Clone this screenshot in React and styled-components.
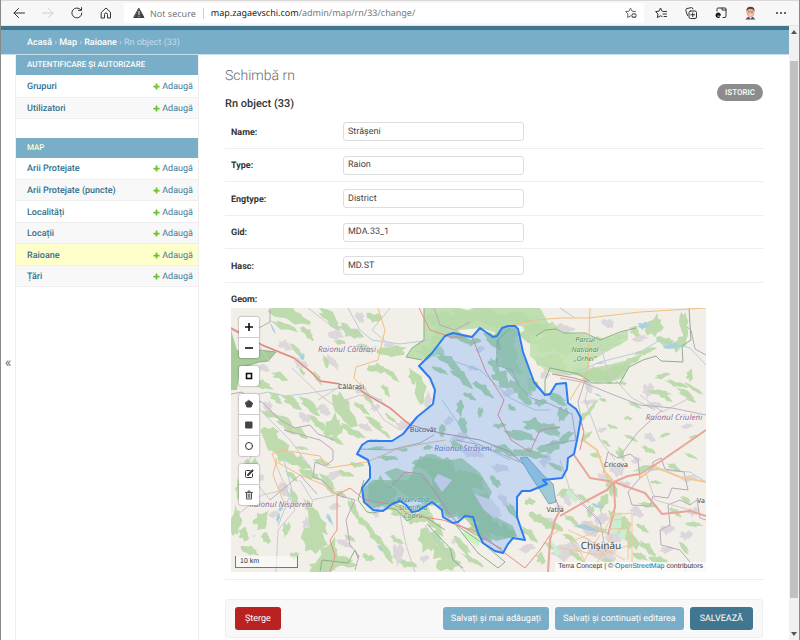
import React from "react";
import styled, { createGlobalStyle, css } from "styled-components";

const GlobalStyle = createGlobalStyle`
  *, *::before, *::after { box-sizing: border-box; }
  body { margin: 0; background: #fff; color: #333; font: 9px/14px Roboto, "Liberation Sans", sans-serif; text-rendering: geometricPrecision; }
  button, input { font: inherit; margin: 0; text-rendering: inherit; }
  a { text-decoration: none; }
`;

/* ---------- window ---------- */

const Window = styled.div`
  min-height: 100vh;
  display: flex;
  flex-direction: column;
  border: 0 solid #8a8a8a;
  border-width: 0 1px;
`;
const Toolbar = styled.header`
  display: flex;
  align-items: center;
  height: 26px;
  padding: 0 12px 0 11px;
  background: #f7f7f7;
  border-top: 1px solid #dcd8d8;
  border-bottom: 1px solid #e4e2e2;
`;
const ToolGroup = styled.div`
  display: flex;
  align-items: center;
  gap: ${(p) => p.$gap}px;
`;
const ToolButton = styled.button`
  display: flex;
  align-items: center;
  justify-content: center;
  width: 13px;
  height: 14px;
  padding: 0;
  border: 0;
  background: none;
  color: ${(p) => (p.disabled ? "#cfcfcf" : "#333")};
`;
const AddressBar = styled.div`
  flex: 1;
  display: flex;
  align-items: center;
  height: 20px;
  margin: 0 10px 0 12px;
  padding: 0 7px 0 9px;
  border-radius: 3px;
  background: #fff;
  color: #777;
  font: 9px/14px "Noto Sans", "Open Sans", sans-serif;
`;
const Security = styled.span`
  padding: 0 7px 0 5px;
  margin-right: 7px;
  border-right: 1px solid #d0d0d0;
  line-height: 11px;
`;
const Url = styled.span`
  flex: 1;
  white-space: nowrap;
  b { font-weight: 400; color: #222; }
`;
const Viewport = styled.div`
  flex: 1;
  display: flex;
`;
const Page = styled.div`
  flex: 1;
  min-width: 0;
  display: flex;
  flex-direction: column;
`;
const ScrollTrack = styled.div`
  width: 10px;
  display: grid;
  grid-template-rows: 35px 1fr 30px 12px;
  justify-items: center;
  background: #f1f1f1;
  svg { margin-top: 4px; }
`;
const ScrollThumb = styled.div`
  width: 8px;
  background: #c1c1c1;
`;

/* ---------- admin chrome ---------- */

const Breadcrumbs = styled.nav`
  height: 29px;
  padding: 5px 26px 0;
  border-top: 4px solid #417690;
  border-bottom: 1px solid #c9dfe9;
  background: #79aec8;
  color: #c4dce8;
  font-size: 9px;
  line-height: 17px;
  a { color: #fff; font-weight: 500; }
`;
const Body = styled.div`
  flex: 1;
  display: flex;
`;
const SidebarToggle = styled.button`
  display: flex;
  justify-content: center;
  width: 15px;
  padding: 299px 0 0;
  border: 0;
  border-right: 1px solid #eee;
  background: #fff;
  color: #417690;
  font-size: 14px;
  line-height: 18px;
`;
const Sidebar = styled.nav`
  width: 183px;
  border-right: 1px solid #eee;
`;
const Module = styled.table`
  width: 100%;
  margin-bottom: 19px;
  border-collapse: collapse;
  caption {
    height: 20px;
    padding: 0 11px;
    background: #79aec8;
    color: ${(p) => (p.$current ? "#ffc" : "#fff")};
    font-size: 8px;
    font-weight: 500;
    line-height: 20px;
    text-align: left;
    text-transform: uppercase;
  }
`;
const ModelRow = styled.tr`
  height: 22px;
  border-bottom: 1px solid #eee;
  &:nth-child(even) { height: 21px; background: #f8f8f8; }
  ${(p) => p.$current && css`&& { background: #ffc; }`}
  th, td { padding: 2px 0 0; line-height: 14px; white-space: nowrap; }
  th { padding-left: 11px; text-align: left; font-weight: 500; }
  td { padding-right: 5px; text-align: right; }
  a { color: #447e9b; }
  th a { color: #35708d; }
  svg { margin-right: 2px; vertical-align: -1px; }
`;
const Main = styled.main`
  flex: 1;
  min-width: 0;
  padding: 12px 26px 2px;
`;
const Heading = styled.div`
  display: flex;
  justify-content: space-between;
  align-items: center;
  margin-bottom: 3px;
`;
const Title = styled.h1`
  margin: 0 0 10px;
  color: #666;
  font-size: 14px;
  font-weight: 300;
  line-height: 18px;
`;
const Subtitle = styled.h2`
  margin: 0;
  font-size: 11px;
  font-weight: 500;
  line-height: 17px;
`;
const HistoryLink = styled.a`
  margin-top: 6px;
  padding: 0 8px;
  border-radius: 9px;
  background: #8c8c8c;
  color: #fff;
  font-size: 8px;
  font-weight: 500;
  line-height: 17px;
  text-transform: uppercase;
`;
const FormRow = styled.div`
  display: flex;
  align-items: center;
  height: 34px;
  padding-left: 6px;
  border-bottom: 1px solid #eee;
  &:nth-child(even) { height: 33px; }
`;
const Label = styled.label`
  width: 112px;
  padding-top: 2px;
  font-weight: 700;
  line-height: 14px;
`;
const TextInput = styled.input.attrs({ type: "text" })`
  width: 181px;
  height: 19px;
  padding: 0 4px;
  border: 1px solid #ddd;
  border-radius: 3px;
  background: #fff;
  color: #444;
`;
const MapRow = styled.div`
  padding: 10px 0 7px 6px;
  border-bottom: 1px solid #eee;
`;
const MapLabel = styled.div`
  height: 15px;
  font-weight: 700;
  line-height: 14px;
`;
const SubmitRow = styled.div`
  display: flex;
  gap: 6px;
  margin-top: 19px;
  padding: 7px 9px;
  border: 1px solid #eee;
  border-radius: 3px;
  background: #f8f8f8;
`;
const tones = { danger: "#ba2121", soft: "#79aec8", strong: "#417690" };
const Button = styled.button`
  height: 23px;
  padding: 0 ${(p) => (p.$tone === "soft" ? 8 : 10)}px;
  border: 0;
  border-radius: 3px;
  background: ${(p) => tones[p.$tone]};
  color: #fff;
  font-size: 9px;
  line-height: 24px;
  white-space: nowrap;
  ${(p) => p.$tone === "danger" && css`margin-right: auto;`}
  ${(p) => p.$tone === "strong" && css`text-transform: uppercase;`}
`;

/* ---------- map ---------- */

const MapBox = styled.div`
  position: relative;
  max-width: 475px;
  overflow: hidden;
  > svg { display: block; width: 100%; height: auto; }
`;
const Controls = styled.div`
  position: absolute;
  top: 9px;
  left: 8px;
  display: flex;
  flex-direction: column;
  gap: 8px;
`;
const ControlGroup = styled.div`
  width: 20px;
  border-radius: 2px;
  background: #fff;
  box-shadow: 0 0 2px rgba(0, 0, 0, 0.55);
`;
const ControlButton = styled.button`
  display: flex;
  align-items: center;
  justify-content: center;
  width: 20px;
  height: 20px;
  padding: 0;
  border: 0;
  background: none;
  color: #333;
  & + & { height: 21px; border-top: 1px solid #ccc; }
`;
const Scale = styled.div`
  position: absolute;
  left: 4px;
  bottom: 4px;
  width: 63px;
  padding-left: 4px;
  border: 1px solid #777;
  border-top: 0;
  background: rgba(255, 255, 255, 0.5);
  font: 7px/11px "Liberation Sans", Arial, sans-serif;
`;
const Attribution = styled.div`
  position: absolute;
  right: 0;
  bottom: 0;
  padding: 0 3px;
  background: rgba(255, 255, 255, 0.7);
  font: 7px/10px "Liberation Sans", Arial, sans-serif;
  a { color: #0078a8; }
`;

/* Irregular patch: an ellipse with a jagged edge, turned by `angle`. */
function patch(x, y, rx, ry, angle) {
  const turn = (angle * Math.PI) / 180;
  const n = 15;
  let d = "";
  for (let i = 0; i < n; i++) {
    const t = (i / n) * Math.PI * 2;
    const k = 0.85 + 0.3 * Math.sin(x * 3.1 + y * 1.7 + i * i * 2.3);
    const px = rx * k * Math.cos(t);
    const py = ry * k * Math.sin(t);
    const gx = x + px * Math.cos(turn) - py * Math.sin(turn);
    const gy = y + px * Math.sin(turn) + py * Math.cos(turn);
    d += `${i ? "L" : "M"}${gx.toFixed(1)} ${gy.toFixed(1)}`;
  }
  return d + "Z";
}

const woods = [
  [290,314,24,8,20],[330,318,16,6,40],[350,332,14,6,30],[308,333,10,4,50],[374,318,9,5,10],[296,350,9,3,40],[284,326,14,4,25],
  [392,352,16,6,-8],[378,368,12,5,10],[392,375,10,3,35],[368,398,9,3,60],[386,390,8,3,55],[340,342,6,3,20],[364,348,8,4,10],
  [420,388,6,17,-12],[414,376,6,9,-25],[326,362,7,3,60],[302,372,5,2,45],[318,378,8,3,65],[280,376,9,4,15],[262,384,12,5,25],
  [345,412,9,22,-22],[334,426,10,13,10],[310,406,14,5,35],[292,402,12,5,25],[276,398,8,4,30],[318,424,12,4,38],[300,432,10,4,30],
  [375,424,12,4,32],[362,408,11,3,38],[352,432,15,4,30],[390,418,8,2,40],[386,434,7,2,35],[286,424,14,6,35],[270,414,8,4,30],
  [276,444,15,9,40],[284,456,16,7,30],[300,462,13,6,20],[270,434,10,7,0],[310,474,12,5,30],[328,484,13,5,45],[322,462,9,3,10],
  [345,474,9,3,20],[356,465,8,3,10],[336,440,9,3,20],[302,448,7,2,15],[292,476,8,3,30],[250,470,8,12,10],[240,490,5,11,-10],
  [236,520,6,16,0],[244,534,6,7,15],[262,520,8,10,40],[266,538,5,6,0],[250,550,10,5,30],[294,498,10,4,60],[310,508,12,4,60],
  [316,524,18,9,55],[312,542,15,12,30],[330,555,12,17,20],[322,566,14,8,0],[344,562,13,6,0],[286,530,4,8,10],[294,556,5,4,0],
  [354,510,4,12,-20],[363,522,9,4,50],[374,536,15,4,50],[386,552,14,4,50],[350,538,6,3,40],[368,558,7,4,20],[341,494,7,3,20],
  [377,494,14,12,40],[390,504,14,7,15],[402,512,15,7,10],[414,518,12,7,20],[424,512,10,6,30],[438,528,10,4,50],[430,520,9,5,40],
  [428,541,12,13,20],[442,552,14,10,45],[448,562,13,9,0],[407,564,10,4,20],[396,540,8,3,35],[472,560,13,3,35],[462,546,13,4,45],
  [445,320,20,10,20],[470,316,25,10,0],[440,333,15,7,-40],[500,320,22,8,5],[532,332,14,11,0],[520,316,14,5,20],[430,352,14,8,10],
  [555,344,26,11,0],[574,342,30,9,5],[600,344,23,8,-5],[555,362,13,9,0],[613,340,15,4,-10],[546,330,14,7,0],[542,362,11,5,40],
  [590,375,20,7,5],[610,375,18,8,-15],[631,361,13,4,-35],[645,352,12,3,-15],[655,325,9,12,15],[665,342,10,5,10],[684,326,5,14,0],
  [680,343,6,10,20],[635,331,6,5,20],[690,375,4,6,20],[694,389,12,2,30],[662,376,8,3,-10],[676,384,12,3,20],[687,395,12,4,30],
  [659,392,12,3,10],[666,397,8,3,30],[623,383,4,2,0],[635,405,8,2,20],[592,407,9,2,-50],[585,415,9,3,-50],[603,400,4,2,0],
  [612,427,6,2,20],[628,418,5,2,0],[586,436,8,3,-40],[606,443,6,2,30],[596,455,6,3,20],[631,438,8,2,20],[648,450,8,3,30],
  [621,455,4,8,-30],[645,468,12,3,-20],[656,482,6,2,10],[674,467,8,3,20],[691,456,7,2,30],[665,435,6,2,-30],[694,437,5,2,-20],
  [611,486,5,12,-20],[603,502,5,10,10],[614,515,7,4,45],[624,526,7,14,-20],[632,540,7,10,-10],[643,528,8,3,40],[648,548,12,4,40],
  [640,556,8,4,30],[660,560,12,4,20],[684,548,8,3,45],[694,524,9,3,10],[676,512,8,3,40],[686,500,6,3,20],[648,505,10,3,15],
  [565,492,9,4,-30],[582,498,9,3,20],[590,512,4,7,20],[572,520,10,3,30],[550,525,14,5,30],[536,518,9,5,20],[530,534,12,4,40],
  [552,547,10,3,35],[570,538,8,3,20],[577,556,10,3,40],[600,530,8,3,30],[541,558,5,6,10],[530,501,6,4,0],[610,562,9,3,30],
];
const innerWoods = [
  [402,482,18,12,20],[382,490,16,14,0],[420,490,22,15,10],[440,475,20,15,25],[455,490,26,20,20],[470,505,22,18,35],[484,518,18,12,40],
  [424,463,14,7,-20],[443,462,10,5,10],[467,480,18,12,30],[495,528,17,7,30],[481,531,15,7,30],[450,508,14,9,20],[508,532,10,5,40],
  [458,336,13,5,10],[472,342,9,4,0],[505,346,14,18,0],[510,335,9,9,0],[492,340,10,6,30],[510,364,16,8,35],[502,378,12,8,40],
  [516,386,10,6,40],[525,398,6,10,-20],[495,365,9,5,50],[532,385,8,6,40],[450,362,17,5,35],[462,377,16,5,40],[484,389,14,4,40],
  [440,370,9,3,30],[470,396,8,3,30],[460,408,4,9,-10],[463,426,5,9,0],[480,413,3,6,10],[456,445,8,4,40],[499,426,7,3,0],
  [535,425,13,7,10],[550,430,12,7,0],[520,435,16,6,20],[550,448,14,6,-20],[530,453,20,5,10],[565,438,10,5,-30],[505,450,14,5,15],
  [557,399,12,5,20],[540,403,7,4,0],[562,415,6,8,20],[511,408,5,3,40],[442,431,4,7,20],[556,467,9,3,20],[513,512,4,10,-30],
  [495,482,8,4,40],[428,447,5,3,0],[388,458,10,3,10],[403,450,6,2,0],[377,448,9,2,0],
];
const towns = [
  [264,368,6,4,0],[300,364,8,5,30],[285,345,8,5,20],[336,334,8,6,20],[333,362,9,4,60],[324,410,7,6,0],[305,418,8,5,20],[268,408,5,7,0],
  [361,388,6,6,0],[375,408,5,4,0],[404,425,8,6,20],[366,427,8,4,30],[389,346,6,3,0],[360,318,5,6,0],[247,441,5,4,0],[284,490,6,8,0],
  [274,514,6,4,0],[307,523,5,6,0],[335,506,6,4,0],[260,478,5,4,0],[334,475,8,5,0],[345,543,9,4,30],[398,555,6,12,0],[376,514,4,5,0],
  [460,437,9,6,0],[470,453,14,5,20],[500,468,9,5,20],[545,460,6,8,0],[530,467,6,4,30],[449,420,5,5,0],[480,349,5,4,0],[509,392,7,5,0],
  [473,368,6,3,0],[562,328,14,5,0],[608,324,7,5,0],[640,338,8,4,0],[588,383,5,12,0],[545,374,5,5,0],[618,369,13,4,-20],[648,391,6,8,0],
  [654,405,9,4,10],[589,402,9,3,0],[602,430,5,3,0],[594,369,5,3,0],[617,470,9,8,0],[603,477,6,4,0],[625,485,6,4,0],[567,499,5,8,0],
  [546,521,9,5,20],[566,551,15,10,0],[589,529,10,9,0],[602,518,8,7,0],[603,555,16,8,0],[617,535,12,8,0],[637,512,7,6,0],[689,478,8,4,0],
  [693,512,6,5,0],[667,530,8,5,0],[686,536,7,5,0],[650,437,7,4,20],[636,460,5,4,0],[687,426,6,3,0],[527,548,8,5,0],[560,508,5,3,0],
  [428,399,4,9,0],[485,505,5,4,0],[440,477,6,9,30],[504,500,9,4,50],[495,508,8,3,45],[424,559,5,4,0],[456,540,5,4,0],[666,550,7,4,0],
];
const pools = [[302,357,3,4,0],[273,329,6,1,60],[380,548,4,2,40],[330,520,2,7,-30],[254,536,1,1,0],[278,518,2,5,0],[643,326,6,4,0],[672,346,9,3,0],[600,363,5,1,0],[598,395,4,1,20],[597,506,7,2,20],[651,470,8,1,0],[281,508,2,4,20],[374,440,5,1,0]];

const toPath = (list) => list.map((p) => patch(...p)).join("");
const DISTRICT =
  "M480 328L493 337L497 336L502 328L508 326L515 326L518 329L523 352L534 382L545 395L550 394L556 384L566 383L568 403L576 409L581 418L577 440L574 454L568 458L567 469L562 478L543 480L547 484L530 491L522 491L517 497L517 517L525 540L513 538L508 544L503 553L495 551L483 543L478 533L473 517L465 516L458 522L453 523L443 517L442 510L432 502L418 511L412 512L406 505L400 501L392 504L383 511L373 510L364 502L362 488L370 478L370 467L368 460L357 454L362 445L368 441L392 441L403 434L417 417L433 404L435 390L430 378L419 366L432 353L445 336L453 333L472 337Z";

const roads = [
  { c: "#cfc8d0", w: 1, d: "M231 330L255 340L270 362M292 368L320 395L340 410M250 400L290 440L312 470M340 402L360 395L382 400M275 462L295 510L278 530L276 572M231 520L262 495L285 490M300 480L312 500L335 495M364 392L384 420L400 430M318 400L344 384M255 445L246 470L270 500M400 515L406 545L415 572M560 460L570 490L600 520M590 380L585 400L600 440L615 460M640 395L662 412L690 398M645 470L655 500L690 510M600 343L608 372L632 398L655 410M545 430L560 437M390 308L372 330L390 345M308 308L330 325L360 332" },
  { c: "#b9b1bf", w: 1, d: "M560 378L582 382L614 395L640 405L672 408L706 415M585 380L578 402L583 430M270 500L300 475L317 494M662 410L638 432L620 456M456 440L480 445L520 462M580 502L600 522L606 552" },
  { c: "#efb3a8", w: 2, d: "M231 328L262 345L294 358L311 372L320 381L340 384M357 388L369 396L390 408L410 425" },
  { c: "#d97f76", w: 1, d: "M231 328L262 345L294 358L311 372L320 381L340 384M357 388L369 396L390 408L410 425" },
  { c: "#e8a59a", w: 2, d: "M560 510L555 520L550 540L548 572M560 516L588 500L607 490L614 482L628 476L640 474L661 461L706 430M574 455L590 478L614 482L645 493L662 514L690 511L706 516M614 482L615 507L608 535" },
  { c: "#b78f9a", w: 1, d: "M410 425L440 433L480 440L510 452L535 475L552 490L560 510" },
  { c: "#ea8e82", w: 1, d: "M330 572L335 556L330 540L337 530L337 495L350 488L365 500L395 505L410 515L443 520L480 533L502 551L525 568L540 550L550 535M419 308L430 330L451 337L472 337L486 372L504 400L498 415L511 440L530 452L540 430L560 427" },
  { c: "#d58b9a", w: 1, d: "M390 488L405 472L422 474L434 490L448 512L459 525L502 549M580 450L584 432L579 415M552 374L574 378L588 382" },
  { c: "#f0bf84", w: 1, d: "M378 308L385 330L378 360L356 367L354 378L370 395M511 325L535 320L560 318L588 318L640 312L706 308M590 308L588 370L570 400M277 465L272 454L282 450L320 456L328 468L367 462L400 448L445 440M277 462L300 475L322 484L337 494M277 458L273 475L286 508" },
  { c: "#f2c995", w: 2, d: "M583 440L597 450L605 472L614 482M640 478L655 467L680 477L706 482" },
  { c: "#f1c698", w: 1, d: "M610 515L632 513L632 565M612 520L628 519L628 560M602 535L614 512M585 538L625 560M568 530L590 540L620 572M563 528L550 536M575 540L600 530L625 528M577 572L600 535M592 572L612 535M585 522L606 532M560 548L600 555L630 545M565 535L580 552L590 572" },
];

const Place = styled.text`
  font-family: "Noto Sans", "Open Sans", sans-serif;
  font-size: ${(p) => p.$size || 7}px;
  font-style: ${(p) => (p.$italic ? "italic" : "normal")};
  fill: ${(p) => p.$color || "#444"};
  stroke: rgba(255, 255, 255, 0.5);
  stroke-width: 1px;
  paint-order: stroke;
  text-anchor: ${(p) => p.$anchor || "middle"};
`;

function MapDrawing() {
  return (
    <svg viewBox="231 308 475 264" role="img" aria-label="Strășeni">
      <rect x="231" y="308" width="475" height="264" fill="#f2efe9" />
      <path d={toPath(towns)} fill="#dcd7db" />
      <path d={toPath(woods)} fill="#bddbad" />
      <path d={toPath(innerWoods)} fill="#b0d3a1" />
      <path d="M424 308L460 308L474 314L492 308L540 308L549 324L535 330L520 326L510 326L500 334L480 328L460 330L445 336L430 355L422 360L406 357L414 346L424 340Z" fill="#b9dba8" opacity="0.85" />
      <path d="M530 336L545 332L552 321L562 333L585 334L600 340L628 330L628 340L606 352L590 362L588 373L560 376L545 370L530 356Z" fill="#bfdfae" opacity="0.85" />
      <path d="M578 374L592 368L612 364L628 360L624 378L612 381L596 383L584 378Z" fill="#b5d8a6" opacity="0.8" />
      <path d="M497 340L503 327L515 327L521 348L530 374L532 396L522 390L508 372L498 358Z" fill="#a9d09b" opacity="0.8" />
      <path d="M408 480L420 456L445 461L462 458L480 473L492 492L486 505L498 518L513 526L517 536L496 541L478 531L462 516L448 518L438 500L420 498L406 503L390 503L372 509L364 500L363 488L375 480Z" fill="#9dc790" opacity="0.75" />
      <path d="M438 474L452 480L442 492L434 480ZM474 494L492 500L502 516L494 518L484 510Z" fill="#e1dce1" />
      <path d="M231 330L237 350L250 354L259 350L276 352L268 361L259 362L246 366L240 370L237 390L231 390Z" fill="#a9cc9b" />
      <path d="M461 534L470 529L480 536L478 547Z" fill="#cbf3be" />
      <path d="M615 513L622 512L621 528L614 535L610 530ZM620 530L627 529L625 540L619 538ZM569 486L580 499L575 503L566 493ZM550 540L562 552L556 557Z" fill="#c9efd0" />
      <g fill="none" strokeLinejoin="round">
        <path d="M250 396L268 392L285 396L310 393L340 388L360 390L380 400L400 417M348 308L360 330L372 340L400 344L430 340M430 345L450 360L480 370L510 398L535 410L550 410M545 365L570 375L600 362L640 352L660 340L690 348L706 365M660 470L690 472L706 482M425 525L440 545L465 572M560 308L575 318M284 460L292 490L278 526M442 400L470 440L510 460" stroke="#b5ced8" strokeWidth="1" />
        <path d="M231 394L242 392L250 401L262 402L280 420L295 428L310 425L318 434L334 440M284 430L320 440L333 450L333 460L325 466L315 462L313 477L322 480L337 495L355 500L346 520L350 545L359 556L355 570M434 308L440 325L455 330L470 322M434 435L420 443L390 450L360 449M706 355L695 349L691 330L687 327M652 470L653 462L661 458L665 469L684 472L688 490L672 488L668 498L653 496L650 506L632 505L628 492L640 478L638 460L630 454L618 458L608 452L603 473M270 308L270 322L255 330L256 346M706 520L700 518L697 500L690 505L680 500L668 505L670 525L660 530L661 545L680 550L690 562L684 572M496 365L512 370L518 385L531 398L550 404L572 414L576 440L545 445" stroke="#b9aabb" strokeWidth="1" />
        <path d="M364 480L358 500L367 512L373 513L391 508L397 510L407 521L419 514L430 520L445 530M424 308L424 340L412 348L406 357L422 360M276 352L268 361L259 362L246 366M276 352L259 350M536 336L545 330L556 329L564 333L585 333L600 340L620 332L636 328M545 395L545 380L550 368L579 374L592 383L620 383L629 367L643 360L656 356L661 361L683 362L682 346L691 340L689 308M320 572L322 560L348 563L355 550L358 558M427 524L450 548L453 560L463 568M455 524L485 545L505 562L498 568L478 553ZM497 340L497 364M500 350L498 340L510 328" stroke="#8fae8b" strokeWidth="1" />
        {roads.map((r, i) => <path key={i} d={r.d} stroke={r.c} strokeWidth={r.w} />)}
      </g>
      <path d="M520 458L527 457L544 476L553 484L556 502L549 504L540 490L530 475Z" fill="#9fc9d6" stroke="#7fa9bd" strokeWidth="1" />
      <path d="M573 526L585 524L602 532L590 531Z" fill="#a8ccd8" />
      <path d={toPath(pools)} fill="#a9d2df" />
      <Place x="364" y="389" $anchor="end">Călărași</Place>
      <Place x="423" y="432">Bucovăț</Place>
      <Place x="347" y="352" $size={8} $italic $color="#8d6d9c">Raionul Călărași</Place>
      <Place x="463" y="451" $size={8} $italic $color="#7d6a9c">Raionul Strășeni</Place>
      <Place x="674" y="420" $size={8} $italic $color="#8d6d9c">Raionul Criuleni</Place>
      <Place x="281" y="507" $size={8} $italic $color="#8d6d9c">Raionul Nisporeni</Place>
      <Place $italic $color="#3f8452">
        <tspan x="585" y="342">Parcul</tspan>
        <tspan x="585" y="352">Național</tspan>
        <tspan x="585" y="361">„Orhei”</tspan>
      </Place>
      <Place $italic $color="#4c9150">
        <tspan x="413" y="502">Rezervația</tspan>
        <tspan x="413" y="510">Științifică</tspan>
        <tspan x="413" y="518">Codru</tspan>
      </Place>
      <path d={DISTRICT} fill="#3388ff" fillOpacity="0.22" stroke="#2b7df0" strokeWidth="2" strokeLinejoin="round" />
      <Place x="616" y="467">Cricova</Place>
      <Place x="555" y="512">Vatra</Place>
      <Place x="697" y="503" $anchor="start">Va</Place>
      <Place x="601" y="549" $size={10}>Chișinău</Place>
    </svg>
  );
}

/* ---------- icons ---------- */

const Icon = ({ size = 12, children, ...rest }) => (
  <svg width={size} height={size} viewBox="0 0 12 12" fill="none" stroke="currentColor" strokeWidth="1" strokeLinecap="round" strokeLinejoin="round" aria-hidden="true" {...rest}>
    {children}
  </svg>
);
const PlusIcon = () => (
  <Icon size={7} viewBox="0 0 8 8" strokeLinecap="butt" strokeWidth="2" stroke="#70bf2b"><path d="M4 .5V7.500M.5 4H7.500" /></Icon>
);

const icons = {
  back: <Icon><path d="M11.5 6H1M5.5 1.5L1 6L5.5 10.5" /></Icon>,
  forward: <Icon><path d="M.5 6H11M6.500 1.500L11 6L6.500 10.500" /></Icon>,
  reload: <Icon><path d="M10.900 6A5 5 0 1 1 9.800 2.800M10.500 .6V3.400H7.500" /></Icon>,
  home: <Icon><path d="M1.500 5.200L6 1L10.500 5.200V11H7.500V7.500A1.500 1.500 0 0 0 4.500 7.500V11H1.500Z" /></Icon>,
  warning: <Icon><path d="M6 1.500L11 10.500H1Z" fill="#444" stroke="#444" /><path d="M6 4.500V7.500M6 9.200V9.300" stroke="#fff" /></Icon>,
  starAdd: <Icon stroke="#666"><path d="M6 8.700L2.500 10.500L3 7L.6 4.600L4 4.200L5.500 1L7 4.200L10.500 4.600" /><circle cx="9" cy="8.500" r="2.600" fill="#666" stroke="none" /><path d="M9 7.300V9.700M7.800 8.500H10.200" stroke="#fff" /></Icon>,
  favorites: <Icon><path d="M7 9.500L5.500 8.800L2.300 10.500L3 7L.6 4.600L4 4.200L5.500 1L7 4.200M8 4.500H11.500M8 7H11.500M9 9.500H11.500" /></Icon>,
  collections: <Icon><rect x="4" y="4" width="7.500" height="7.500" rx="1.500" /><path d="M7.750 5.800V9.700M5.800 7.750H9.700M2.500 8.500L.8 3.500Q.5 2 2 1.500L6.500 .6Q7.600 .5 8 2" /></Icon>,
  ieMode: <Icon><path d="M2 4V2Q2 1 3 1H10Q11 1 11 2V9Q11 10.500 10 10.500H8M7 1V3H11" /><path d="M1.200 8H5.200A2 2 0 1 0 4.700 9.600" stroke="#111" strokeWidth="1.400" strokeLinecap="butt" /></Icon>,
  profile: (
    <Icon size={14} viewBox="0 0 14 14" stroke="none">
      <path d="M1.500 14Q3 11.500 5 11L9 11Q11 11.500 12 14Z" fill="#4b5160" />
      <path d="M5 10.500L7 13.500L9 10.500Z" fill="#fff" />
      <ellipse cx="7" cy="6.400" rx="4.300" ry="5.400" fill="#e8b198" />
      <path d="M2.700 5.500Q2 .3 7 .3Q12 .3 11.300 5.500Q10.500 2.700 7 2.400Q3.500 2.700 2.700 5.500Z" fill="#5e4236" />
      <path d="M4.800 8.300Q7 9.300 9.200 8.300Q7 11.200 4.800 8.300Z" fill="#fff" />
      <path d="M4.700 5.700H6M8 5.700H9.300" stroke="#7a5648" strokeWidth=".7" />
    </Icon>
  ),
  more: <Icon fill="currentColor" stroke="none"><circle cx="2" cy="6" r="1" /><circle cx="6" cy="6" r="1" /><circle cx="10" cy="6" r="1" /></Icon>,
  zoomIn: <Icon strokeWidth="1.600" stroke="#111" strokeLinecap="butt"><path d="M6 2V10M2 6H10" /></Icon>,
  zoomOut: <Icon strokeWidth="1.600" stroke="#111" strokeLinecap="butt"><path d="M2 6H10" /></Icon>,
  extent: <Icon strokeWidth="1.600" stroke="#111" strokeLinejoin="miter"><rect x="3.500" y="3.500" width="5" height="5" /></Icon>,
  polygon: <Icon><path d="M6 2.500L9.500 5L8.200 9H3.800L2.500 5Z" fill="#444" stroke="#444" /></Icon>,
  rectangle: <Icon><rect x="3" y="3" width="6" height="6" fill="#444" stroke="#444" /></Icon>,
  circle: <Icon><circle cx="6" cy="6" r="3.500" /></Icon>,
  edit: <Icon><path d="M7 2.500H3.500Q2.500 2.500 2.500 3.500V8.500Q2.500 9.500 3.500 9.500H8.500Q9.500 9.500 9.500 8.500V6" /><path d="M5 7L9.500 2.500" strokeWidth="2" /></Icon>,
  trash: <Icon stroke="#555"><path d="M2.500 3.500H9.500M5 3V2H7V3M3.500 4V10H8.500V4M5.200 5V8.500M6.800 5V8.500" /></Icon>,
};

/* ---------- data ---------- */

const modules = [
  { title: "Autentificare și autorizare", models: ["Grupuri", "Utilizatori"] },
  { title: "Map", current: true, models: ["Arii Protejate", "Arii Protejate (puncte)", "Localități", "Locații", "Raioane", "Țări"] },
];
const fields = [["Name", "Strășeni"], ["Type", "Raion"], ["Engtype", "District"], ["Gid", "MDA.33_1"], ["Hasc", "MD.ST"]];
const controls = [
  [["zoomIn", "Zoom in"], ["zoomOut", "Zoom out"]],
  [["extent", "Reset view"]],
  [["polygon", "Draw a polygon"], ["rectangle", "Draw a rectangle"], ["circle", "Draw a circle"]],
  [["edit", "Edit layers"], ["trash", "Delete layers"]],
];
const Tool = ({ icon, label, ...rest }) => (
  <ToolButton type="button" aria-label={label} {...rest}>{icons[icon]}</ToolButton>
);

export default function App() {
  return (
    <Window>
      <GlobalStyle />
      <Toolbar>
        <ToolGroup $gap={16}>
          <Tool icon="back" label="Back" />
          <Tool icon="forward" label="Forward" disabled />
          <Tool icon="reload" label="Reload" />
          <Tool icon="home" label="Home" />
        </ToolGroup>
        <AddressBar>
          {icons.warning}
          <Security>Not secure</Security>
          <Url><b>map.zagaevschi.com</b>/admin/map/rn/33/change/</Url>
          <Tool icon="starAdd" label="Add to favorites" />
        </AddressBar>
        <ToolGroup $gap={17}>
          <Tool icon="favorites" label="Favorites" />
          <Tool icon="collections" label="Collections" />
          <Tool icon="ieMode" label="Internet Explorer mode" />
          <Tool icon="profile" label="Profile" />
          <Tool icon="more" label="More" />
        </ToolGroup>
      </Toolbar>
      <Viewport>
        <Page>
          <Breadcrumbs>
            <a href="#home">Acasă</a> › <a href="#map">Map</a> › <a href="#raioane">Raioane</a> › Rn object (33)
          </Breadcrumbs>
          <Body>
            <SidebarToggle type="button" aria-label="Toggle navigation">«</SidebarToggle>
            <Sidebar>
              {modules.map((m) => (
                <Module key={m.title} $current={m.current}>
                  <caption>{m.title}</caption>
                  <tbody>
                    {m.models.map((model) => (
                      <ModelRow key={model} $current={model === "Raioane"}>
                        <th scope="row"><a href="#list">{model}</a></th>
                        <td><a href="#add"><PlusIcon />Adaugă</a></td>
                      </ModelRow>
                    ))}
                  </tbody>
                </Module>
              ))}
            </Sidebar>
            <Main>
              <Heading>
                <div>
                  <Title>Schimbă rn</Title>
                  <Subtitle>Rn object (33)</Subtitle>
                </div>
                <HistoryLink href="#history">Istoric</HistoryLink>
              </Heading>
              <form onSubmit={(e) => e.preventDefault()}>
                <div>
                  {fields.map(([label, value]) => (
                    <FormRow key={label}>
                      <Label htmlFor={label}>{label}:</Label>
                      <TextInput id={label} defaultValue={value} />
                    </FormRow>
                  ))}
                </div>
                <MapRow>
                  <MapLabel>Geom:</MapLabel>
                  <MapBox>
                    <MapDrawing />
                    <Controls>
                      {controls.map((group, i) => (
                        <ControlGroup key={i}>
                          {group.map(([icon, label]) => (
                            <ControlButton key={icon} type="button" aria-label={label}>{icons[icon]}</ControlButton>
                          ))}
                        </ControlGroup>
                      ))}
                    </Controls>
                    <Scale>10 km</Scale>
                    <Attribution>Terra Concept | © <a href="#osm">OpenStreetMap</a> contributors</Attribution>
                  </MapBox>
                </MapRow>
                <SubmitRow>
                  <Button type="button" $tone="danger">Șterge</Button>
                  <Button type="submit" $tone="soft">Salvați și mai adăugați</Button>
                  <Button type="submit" $tone="soft">Salvați și continuați editarea</Button>
                  <Button type="submit" $tone="strong">Salvează</Button>
                </SubmitRow>
              </form>
            </Main>
          </Body>
        </Page>
        <ScrollTrack aria-hidden="true">
          <svg width="6" height="4" viewBox="0 0 6 4"><path d="M0 4L3 0L6 4Z" fill="#555" /></svg>
          <ScrollThumb />
          <span />
          <svg width="6" height="4" viewBox="0 0 6 4"><path d="M0 0L3 4L6 0Z" fill="#555" /></svg>
        </ScrollTrack>
      </Viewport>
    </Window>
  );
}
